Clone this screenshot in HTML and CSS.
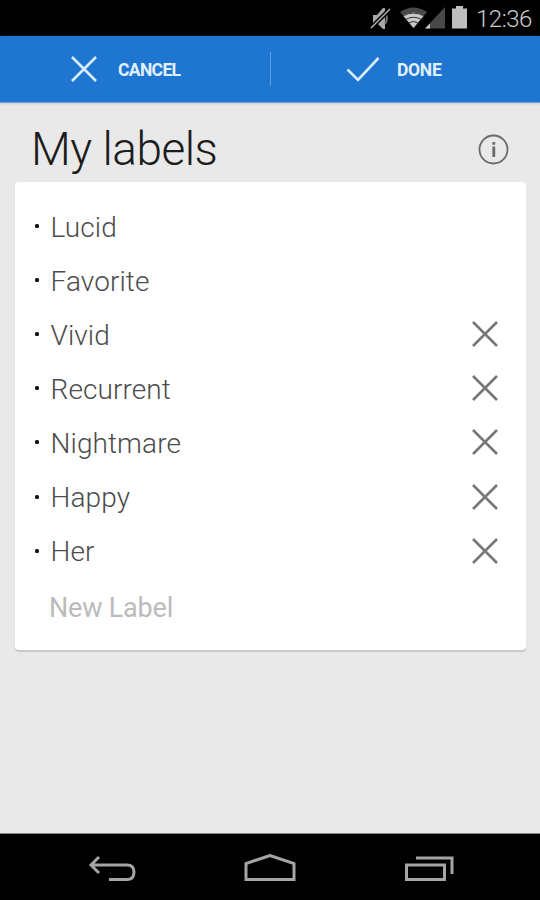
FILE: index.html
```
<!DOCTYPE html>
<html lang="en">
<head>
<meta charset="utf-8">
<title>My labels</title>
<link rel="stylesheet" href="styles.css">
</head>
<body>
<div class="screen">
  <header class="status">
    <svg width="110" height="36" viewBox="0 0 110 36">
      <path d="M13 15h4l6-7h2v21h-2l-6-6h-4z" fill="#a8a8a8"/>
      <path d="M25 13q4 5 0 11" fill="none" stroke="#777" stroke-width="2"/>
      <path d="M11 28L30 9" stroke="#000" stroke-width="4.500"/>
      <path d="M11 28L30 9" stroke="#aaa" stroke-width="1.600"/>
      <path d="M40 12q13.500-9 27 0L53.500 28z" fill="#484848"/>
      <path d="M43 15.500q10.500-6 21 0L53.500 28z" fill="#c8c8c8"/>
      <path d="M43 16q10.500-6 21 0M45.500 19.500q8-4.500 16 0M48 23q5.500-3 11 0" fill="none" stroke="#333" stroke-width="1"/>
      <path d="M65 28.500L85 7v21.500z" fill="#484848"/>
      <path d="M65 28.500l5-5v5z" fill="#c8c8c8"/>
      <path d="M92 8.500h4V6h7v2.500h4v20H92z" fill="#bebebe"/>
    </svg>
    <span class="clock">12:36</span>
  </header>
  <nav class="actions">
    <div class="action cancel">
      <svg width="28" height="28" viewBox="0 0 28 28"><path d="M2 2l24 24M26 2L2 26"/></svg>
      <span>CANCEL</span>
    </div>
    <div class="divider"></div>
    <div class="action done">
      <svg width="34" height="28" viewBox="0 0 34 28"><path d="M1.500 14.500L12 25L32.500 3"/></svg>
      <span>DONE</span>
    </div>
  </nav>
  <main class="content">
    <div class="heading">
      <h1>My labels</h1>
      <svg width="32" height="32" viewBox="0 0 32 32">
        <circle cx="15.500" cy="15.500" r="14" fill="none" stroke="#6a6a6a" stroke-width="1.800"/>
        <path d="M15.800 8v2.800M15.800 12.500v10.500" stroke="#6a6a6a" stroke-width="2.800"/>
      </svg>
    </div>
    <section class="card">
      <ul class="labels">
        <li><i></i><span>Lucid</span></li>
        <li><i></i><span>Favorite</span></li>
        <li><i></i><span>Vivid</span><svg class="remove" viewBox="0 0 28 28"><path d="M2 2l24 24M26 2L2 26"/></svg></li>
        <li><i></i><span>Recurrent</span><svg class="remove" viewBox="0 0 28 28"><path d="M2 2l24 24M26 2L2 26"/></svg></li>
        <li><i></i><span>Nightmare</span><svg class="remove" viewBox="0 0 28 28"><path d="M2 2l24 24M26 2L2 26"/></svg></li>
        <li><i></i><span>Happy</span><svg class="remove" viewBox="0 0 28 28"><path d="M2 2l24 24M26 2L2 26"/></svg></li>
        <li><i></i><span>Her</span><svg class="remove" viewBox="0 0 28 28"><path d="M2 2l24 24M26 2L2 26"/></svg></li>
      </ul>
      <div class="new-label">New Label</div>
    </section>
  </main>
  <footer class="navbar">
    <svg width="50" height="30" viewBox="0 0 50 30"><path d="M12 3L4 11L12 19M4 11H40Q47 11 47 18Q47 25.500 40 25.500H22"/></svg>
    <svg width="54" height="30" viewBox="0 0 54 30"><path d="M3 25.500V9.500L27 1.500L51 9.500V25.500Z"/></svg>
    <svg width="52" height="30" viewBox="0 0 52 30"><path d="M3.500 11H41.500V25.500H3.500ZM13 4H49V20"/></svg>
  </footer>
</div>
</body>
</html>
```

FILE: styles.css
```
body {
  margin: 0;
  font-family: Roboto, sans-serif;
}

.screen {
  display: flex;
  flex-direction: column;
  width: 540px;
  height: 900px;
  overflow: hidden;
  background: #e9e9e9;
}

.status {
  display: flex;
  align-items: center;
  height: 36px;
  padding-left: 360px;
  background: #000;
}

.clock {
  margin: 2px 0 0 6px;
  font-size: 24px;
  line-height: 36px;
  font-weight: 300;
  letter-spacing: -0.500px;
  color: #ccc;
  white-space: nowrap;
}

.actions {
  display: flex;
  align-items: center;
  height: 66px;
  border-bottom: 1px solid #75a3d4;
  box-shadow: 0 1px 2px #ccc;
  background: #1f76d0;
  color: #e2f0fd;
}

.action {
  display: flex;
  flex: 1 1 0;
  box-sizing: border-box;
  align-items: center;
  height: 66px;
  font-size: 17.500px;
  font-weight: 700;
  letter-spacing: -0.650px;
}

.action span {
  padding-top: 2px;
}

.action svg {
  fill: none;
  stroke: #d8edff;
  stroke-width: 2.600;
}

.cancel {
  flex: 0 0 270px;
  gap: 20px;
  padding-left: 70px;
}

.done {
  gap: 17px;
  padding-left: 75px;
  letter-spacing: -0.300px;
}

.divider {
  width: 1px;
  height: 34px;
  background: #5d9ee0;
}

.content {
  flex: 1;
}

.heading {
  display: flex;
  align-items: center;
  justify-content: space-between;
  height: 79px;
  padding: 0 30px 0 31px;
}

.heading svg {
  margin-top: 14px;
}

h1 {
  margin: 13px 0 0;
  font-size: 46px;
  line-height: 54px;
  font-weight: 300;
  letter-spacing: -0.500px;
  color: #1c1c1c;
}

.card {
  height: 468px;
  margin: 0 14px 0 15px;
  border-radius: 4px;
  background: #fff;
  box-shadow: 0 2px 1px #c8c8c8;
}

.labels {
  margin: 0;
  padding: 18px 27px 0 20px;
  list-style: none;
}

.labels li {
  display: flex;
  align-items: center;
  height: 54.100px;
  font-size: 28px;
  font-weight: 300;
  letter-spacing: 0.100px;
  color: #4c4c4c;
}

.labels i {
  width: 4px;
  height: 4px;
  margin: -2px 11.500px 0 0;
  border-radius: 1.500px;
  background: #111;
}

.remove {
  width: 28px;
  height: 28px;
  margin: -2px 0 0 auto;
  fill: none;
  stroke: #777;
  stroke-width: 2.600;
}

.new-label {
  padding-left: 34px;
  font-size: 27px;
  line-height: 58px;
  letter-spacing: -0.200px;
  color: #bbb;
}

.navbar {
  display: flex;
  align-items: center;
  justify-content: space-between;
  height: 67px;
  padding: 4px 85px 0 87px;
  box-sizing: border-box;
  border-top: 1px solid #888;
  background: #000;
}

.navbar svg {
  fill: none;
  stroke: #a5a5a5;
  stroke-width: 3;
}
```
